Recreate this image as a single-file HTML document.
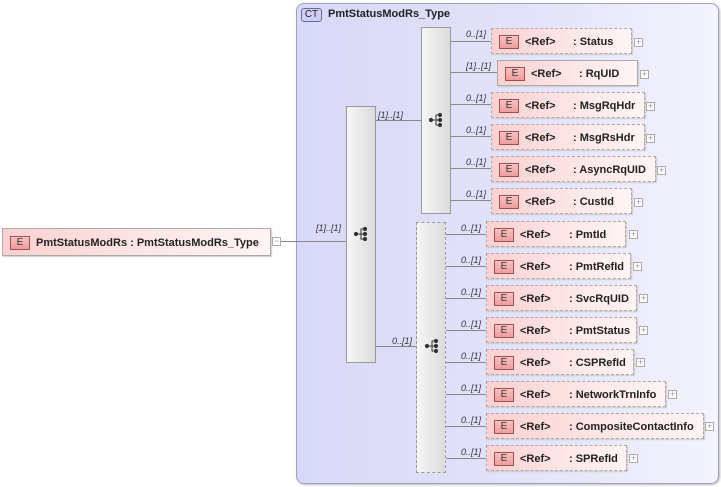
<!DOCTYPE html>
<html><head><meta charset="utf-8"><style>
body{margin:0;width:721px;height:487px;background:#fff;position:relative;overflow:hidden;font-family:"Liberation Sans",Arial,sans-serif;}
div,span{position:absolute;box-sizing:border-box;}
.ct{left:296px;top:3px;width:423px;height:481px;border:1px solid #a0a0b8;border-radius:8px;background:linear-gradient(to right,#d8d8f8,#e4e4fa 60%,#f4f4fe);box-shadow:1px 1px 2px #bbb;}
.ctb{left:301px;top:8px;width:21px;height:14px;border:1px solid #6a6a9a;border-radius:3px;background:#cfcff2;font-size:10px;text-align:center;line-height:12px;color:#223;}
.ctt{left:328px;top:8px;font-size:11px;font-weight:bold;color:#222;}
.seq{border:1px solid #999;background:linear-gradient(to right,#f6f6f6,#dcdcdc);}
.dash{border:1px dashed #999;}
.el{height:26px;border:1px solid #aaa;background:linear-gradient(to right,#fcd0d0,#fde8e8 60%,#fff4f4);box-shadow:1px 1px 1px #ccc;font-size:11px;font-weight:bold;color:#222;}
.el.d{border:1px dashed #aaa;}
.b{left:7px;top:6px;width:20px;height:14px;border:1px solid #a05050;background:linear-gradient(#f8c0c0,#ee9c9c);font-size:10px;font-weight:normal;text-align:center;line-height:12px;color:#333;}
.r{left:33px;top:7px;}
.n{top:7px;white-space:nowrap;}
.p{width:9px;height:9px;border:1px solid #aaa;background:#fff;font-size:9px;line-height:7px;text-align:center;color:#999;}
.h{height:1px;background:#888;}
.m{font-size:9px;font-style:italic;color:#333;white-space:nowrap;}
</style></head><body>
<div class="ct"></div><div class="ctb">CT</div><div class="ctt">PmtStatusModRs_Type</div>

<div class="el" style="left:2px;top:228px;width:269px;height:28px;">
<div class="b" style="top:7px">E</div><span style="left:33px;top:8px;font-size:11px">PmtStatusModRs&nbsp;: PmtStatusModRs_Type</span></div>
<div class="p" style="left:272px;top:237px;">−</div>
<div class="h" style="left:281px;top:241px;width:65px"></div>
<div class="m" style="left:316px;top:223px">[1]..[1]</div>

<div class="seq" style="left:346px;top:106px;width:30px;height:257px"></div>
<svg style="position:absolute;left:353px;top:226px" width="16" height="16" viewBox="0 0 16 16"><g fill="#333" stroke="#333"><circle cx="3" cy="8" r="1.6"/><line x1="3" y1="8" x2="8" y2="8"/><polyline points="11,3 8,3 8,13 11,13" fill="none"/><line x1="8" y1="8" x2="11" y2="8"/><circle cx="12" cy="3" r="1.6"/><circle cx="12" cy="8" r="1.6"/><circle cx="12" cy="13" r="1.6"/></g></svg>

<div class="h" style="left:376px;top:120px;width:45px"></div>
<div class="m" style="left:378px;top:110px">[1]..[1]</div>
<div class="h" style="left:376px;top:346px;width:40px"></div>
<div class="m" style="left:392px;top:336px">0..[1]</div>

<div class="seq" style="left:421px;top:27px;width:30px;height:187px"></div>
<svg style="position:absolute;left:428px;top:112px" width="16" height="16" viewBox="0 0 16 16"><g fill="#333" stroke="#333"><circle cx="3" cy="8" r="1.6"/><line x1="3" y1="8" x2="8" y2="8"/><polyline points="11,3 8,3 8,13 11,13" fill="none"/><line x1="8" y1="8" x2="11" y2="8"/><circle cx="12" cy="3" r="1.6"/><circle cx="12" cy="8" r="1.6"/><circle cx="12" cy="13" r="1.6"/></g></svg>
<div class="seq dash" style="left:416px;top:222px;width:30px;height:251px"></div>
<svg style="position:absolute;left:424px;top:338px" width="16" height="16" viewBox="0 0 16 16"><g fill="#333" stroke="#333"><circle cx="3" cy="8" r="1.6"/><line x1="3" y1="8" x2="8" y2="8"/><polyline points="11,3 8,3 8,13 11,13" fill="none"/><line x1="8" y1="8" x2="11" y2="8"/><circle cx="12" cy="3" r="1.6"/><circle cx="12" cy="8" r="1.6"/><circle cx="12" cy="13" r="1.6"/></g></svg>

<div class="h" style="left:451px;top:41px;width:40px"></div><div class="m" style="left:466px;top:29px">0..[1]</div>
<div class="el d" style="left:491px;top:28px;width:141px"><div class="b">E</div><span class="r">&lt;Ref&gt;</span><span class="n" style="left:81px">: Status</span></div><div class="p" style="left:634px;top:38px">+</div>

<div class="h" style="left:451px;top:72px;width:46px"></div><div class="m" style="left:466px;top:61px">[1]..[1]</div>
<div class="el" style="left:497px;top:60px;width:141px"><div class="b">E</div><span class="r">&lt;Ref&gt;</span><span class="n" style="left:81px">: RqUID</span></div><div class="p" style="left:640px;top:70px">+</div>

<div class="h" style="left:451px;top:104px;width:40px"></div><div class="m" style="left:466px;top:93px">0..[1]</div>
<div class="el d" style="left:491px;top:92px;width:154px"><div class="b">E</div><span class="r">&lt;Ref&gt;</span><span class="n" style="left:81px">: MsgRqHdr</span></div><div class="p" style="left:646px;top:102px">+</div>

<div class="h" style="left:451px;top:136px;width:40px"></div><div class="m" style="left:466px;top:125px">0..[1]</div>
<div class="el d" style="left:491px;top:124px;width:154px"><div class="b">E</div><span class="r">&lt;Ref&gt;</span><span class="n" style="left:81px">: MsgRsHdr</span></div><div class="p" style="left:646px;top:134px">+</div>

<div class="h" style="left:451px;top:168px;width:40px"></div><div class="m" style="left:466px;top:157px">0..[1]</div>
<div class="el d" style="left:491px;top:156px;width:165px"><div class="b">E</div><span class="r">&lt;Ref&gt;</span><span class="n" style="left:81px">: AsyncRqUID</span></div><div class="p" style="left:657px;top:166px">+</div>

<div class="h" style="left:451px;top:200px;width:40px"></div><div class="m" style="left:466px;top:189px">0..[1]</div>
<div class="el d" style="left:491px;top:188px;width:141px"><div class="b">E</div><span class="r">&lt;Ref&gt;</span><span class="n" style="left:81px">: CustId</span></div><div class="p" style="left:634px;top:198px">+</div>

<div class="h" style="left:446px;top:234px;width:40px"></div><div class="m" style="left:461px;top:223px">0..[1]</div>
<div class="el d" style="left:486px;top:221px;width:140px"><div class="b">E</div><span class="r">&lt;Ref&gt;</span><span class="n" style="left:82px">: PmtId</span></div><div class="p" style="left:629px;top:230px">+</div>

<div class="h" style="left:446px;top:266px;width:40px"></div><div class="m" style="left:461px;top:255px">0..[1]</div>
<div class="el d" style="left:486px;top:253px;width:145px"><div class="b">E</div><span class="r">&lt;Ref&gt;</span><span class="n" style="left:82px">: PmtRefId</span></div><div class="p" style="left:633px;top:262px">+</div>

<div class="h" style="left:446px;top:298px;width:40px"></div><div class="m" style="left:461px;top:287px">0..[1]</div>
<div class="el d" style="left:486px;top:285px;width:151px"><div class="b">E</div><span class="r">&lt;Ref&gt;</span><span class="n" style="left:82px">: SvcRqUID</span></div><div class="p" style="left:639px;top:294px">+</div>

<div class="h" style="left:446px;top:330px;width:40px"></div><div class="m" style="left:461px;top:319px">0..[1]</div>
<div class="el d" style="left:486px;top:317px;width:151px"><div class="b">E</div><span class="r">&lt;Ref&gt;</span><span class="n" style="left:82px">: PmtStatus</span></div><div class="p" style="left:639px;top:326px">+</div>

<div class="h" style="left:446px;top:362px;width:40px"></div><div class="m" style="left:461px;top:351px">0..[1]</div>
<div class="el d" style="left:486px;top:349px;width:148px"><div class="b">E</div><span class="r">&lt;Ref&gt;</span><span class="n" style="left:82px">: CSPRefId</span></div><div class="p" style="left:636px;top:358px">+</div>

<div class="h" style="left:446px;top:394px;width:40px"></div><div class="m" style="left:461px;top:383px">0..[1]</div>
<div class="el d" style="left:486px;top:381px;width:180px"><div class="b">E</div><span class="r">&lt;Ref&gt;</span><span class="n" style="left:82px">: NetworkTrnInfo</span></div><div class="p" style="left:668px;top:390px">+</div>

<div class="h" style="left:446px;top:426px;width:40px"></div><div class="m" style="left:461px;top:415px">0..[1]</div>
<div class="el d" style="left:486px;top:413px;width:218px"><div class="b">E</div><span class="r">&lt;Ref&gt;</span><span class="n" style="left:82px">: CompositeContactInfo</span></div><div class="p" style="left:705px;top:422px">+</div>

<div class="h" style="left:446px;top:458px;width:40px"></div><div class="m" style="left:461px;top:447px">0..[1]</div>
<div class="el d" style="left:486px;top:445px;width:141px"><div class="b">E</div><span class="r">&lt;Ref&gt;</span><span class="n" style="left:82px">: SPRefId</span></div><div class="p" style="left:629px;top:454px">+</div>
</body></html>
